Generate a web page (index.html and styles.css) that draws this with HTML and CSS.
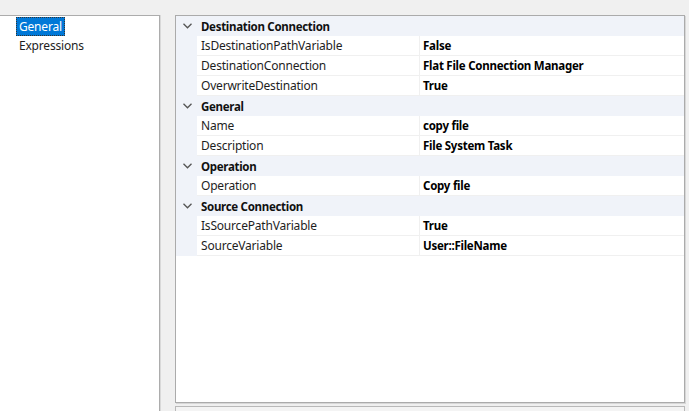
FILE: index.html
```html
<!DOCTYPE html>
<html>
<head>
<meta charset="utf-8">
<link rel="stylesheet" href="styles.css">
</head>
<body>
<div class="layout">
  <div class="nav">
    <div class="nav-item selected">General</div>
    <div class="nav-item">Expressions</div>
  </div>
  <div class="main">
    <div class="grid">
      <div class="cat"><span class="chev"><svg width="9" height="6" viewBox="0 0 9 6"><path d="M0.5 0.8 L4.5 4.8 L8.5 0.8" fill="none" stroke="#555" stroke-width="1.3"/></svg></span><span class="cat-name">Destination Connection</span></div>
      <div class="prop"><span class="margin"></span><span class="name">IsDestinationPathVariable</span><span class="value">False</span></div>
      <div class="prop"><span class="margin"></span><span class="name">DestinationConnection</span><span class="value">Flat File Connection Manager</span></div>
      <div class="prop"><span class="margin"></span><span class="name">OverwriteDestination</span><span class="value">True</span></div>
      <div class="cat"><span class="chev"><svg width="9" height="6" viewBox="0 0 9 6"><path d="M0.5 0.8 L4.5 4.8 L8.5 0.8" fill="none" stroke="#555" stroke-width="1.3"/></svg></span><span class="cat-name">General</span></div>
      <div class="prop"><span class="margin"></span><span class="name">Name</span><span class="value">copy file</span></div>
      <div class="prop"><span class="margin"></span><span class="name">Description</span><span class="value">File System Task</span></div>
      <div class="cat"><span class="chev"><svg width="9" height="6" viewBox="0 0 9 6"><path d="M0.5 0.8 L4.5 4.8 L8.5 0.8" fill="none" stroke="#555" stroke-width="1.3"/></svg></span><span class="cat-name">Operation</span></div>
      <div class="prop"><span class="margin"></span><span class="name">Operation</span><span class="value">Copy file</span></div>
      <div class="cat"><span class="chev"><svg width="9" height="6" viewBox="0 0 9 6"><path d="M0.5 0.8 L4.5 4.8 L8.5 0.8" fill="none" stroke="#555" stroke-width="1.3"/></svg></span><span class="cat-name">Source Connection</span></div>
      <div class="prop"><span class="margin"></span><span class="name">IsSourcePathVariable</span><span class="value">True</span></div>
      <div class="prop"><span class="margin"></span><span class="name">SourceVariable</span><span class="value">User::FileName</span></div>
    </div>
    <div class="desc"></div>
  </div>
</div>
</body>
</html>
```
FILE: styles.css
```css
html, body {
  margin: 0;
  padding: 0;
  height: 100%;
  overflow: hidden;
}
body {
  background: #f0f0f0;
  font-family: "Noto Sans", "Open Sans", sans-serif;
  font-size: 12px;
  letter-spacing: -0.2px;
  color: #1e1e1e;
}
.layout {
  display: flex;
  padding-top: 15px;
  height: 100%;
  box-sizing: border-box;
}
.nav {
  width: 160px;
  background: #fff;
  border-top: 1px solid #acacac;
  border-right: 1px solid #acacac;
  box-shadow: 1px 0 0 #d9d9d9;
  padding: 1px 0 0 16px;
  box-sizing: border-box;
}
.nav-item {
  height: 18px;
  line-height: 17px;
  padding: 0 2px;
  display: table;
  border: 1px dotted transparent;
  box-sizing: border-box;
  margin-bottom: 1px;
}
.nav-item + .nav-item {
  margin-top: -1px;
}
.nav-item.selected {
  background: #0078d7;
  color: #fff;
  border-color: #333;
}
.main {
  margin-left: 15px;
  width: 510px;
  display: flex;
  flex-direction: column;
  gap: 3px;
}
.grid {
  height: 388px;
  flex: none;
  box-sizing: border-box;
  background: #fff;
  border: 1px solid #ababab;
  box-shadow: 1px 1px 0 #d7d7d7;
}
.desc {
  flex: 1;
  background: #f4f4f4;
  border: 1px solid #b9b9b9;
  border-bottom: none;
}
.cat {
  height: 20px;
  background: #f0f3f9;
  display: flex;
  align-items: center;
  font-weight: bold;
  font-size: 11.5px;
  letter-spacing: -0.3px;
  color: #111;
}
.chev {
  width: 21px;
  display: flex;
  justify-content: center;
  padding-left: 1px;
  box-sizing: border-box;
}
.cat-name {
  padding-left: 4px;
}
.prop {
  height: 20px;
  display: grid;
  grid-template-columns: 21px 223px 1fr;
}
.margin {
  background: #f0f3f9;
}
.name, .value {
  border-bottom: 1px solid #f0f0f0;
  padding-top: 1px;
  line-height: 18px;
}
.name {
  padding-left: 4px;
  border-right: 1px solid #f0f0f0;
}
.value {
  padding-left: 3px;
  font-weight: bold;
  font-size: 11.5px;
  letter-spacing: -0.25px;
  color: #000;
}
```
